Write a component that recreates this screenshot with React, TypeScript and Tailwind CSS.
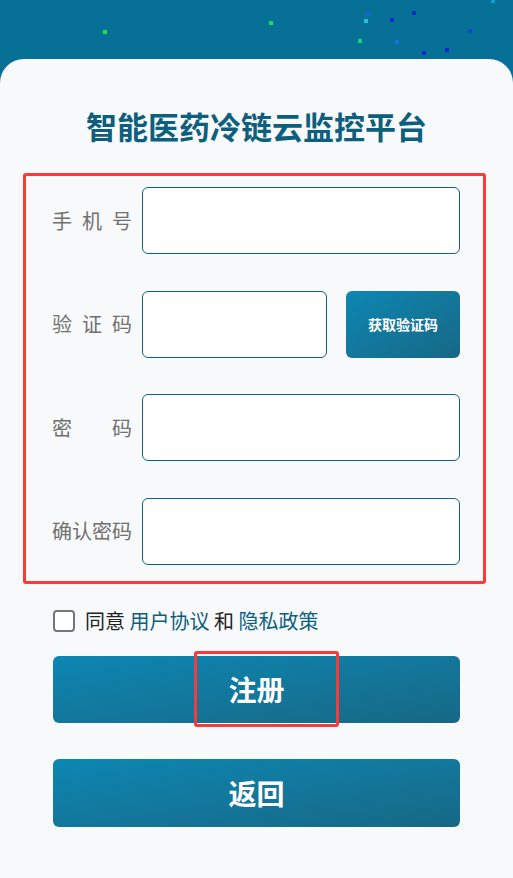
import React from "react";

const dots = [
  { x: 105, y: 32, c: "#1be04a" },
  { x: 271, y: 23, c: "#1be04a" },
  { x: 368, y: 13, c: "#1a5fe0" },
  { x: 366, y: 21, c: "#16c8d8" },
  { x: 392, y: 20, c: "#0b2bd0" },
  { x: 414, y: 13, c: "#0b2bd0" },
  { x: 493, y: 1, c: "#0fa0d8" },
  { x: 360, y: 41, c: "#18d07a" },
  { x: 397, y: 42, c: "#1870e0" },
  { x: 470, y: 31, c: "#1548d8" },
  { x: 424, y: 53, c: "#0b2bd0" },
  { x: 447, y: 50, c: "#0b2bd0" },
];

const font = { fontFamily: '"Noto Sans CJK SC", "Noto Sans", sans-serif' };

function Label({ chars }: { chars: string[] }) {
  return (
    <div className="w-[80px] shrink-0 flex justify-between text-[20px] leading-none text-[#707070]">
      {chars.map((c, i) => (
        <span key={i}>{c}</span>
      ))}
    </div>
  );
}

function Field() {
  return (
    <div className="flex-1 h-[67px] rounded-[6px] border border-[#0f6382] bg-white" />
  );
}

export default function App() {
  return (
    <div className="min-h-screen flex flex-col bg-[#077096]" style={font}>
      {/* header with particles */}
      <div className="h-[59px] relative shrink-0">
        {dots.map((d, i) => (
          <span
            key={i}
            className="absolute w-[4px] h-[4px]"
            style={{ left: d.x - 2, top: d.y - 2, background: d.c }}
          />
        ))}
      </div>

      <div className="flex-1 bg-[#f7f9fb] rounded-t-[24px] pb-[52px]">
        <h1 className="pt-[47px] h-[87px] text-center text-[31px] leading-[40px] font-bold text-[#0e5f7d]">
          智能医药冷链云监控平台
        </h1>

        {/* form */}
        <div className="mt-[27px] ml-[23px] w-[463px] border-[3px] border-[#f53b3b] rounded-[3px] pt-[11px] pb-[16px] pl-[26px] pr-[23px] flex flex-col gap-[36.5px]">
          <div className="flex items-center gap-[10px]">
            <Label chars={["手", "机", "号"]} />
            <Field />
          </div>
          <div className="flex items-center gap-[10px]">
            <Label chars={["验", "证", "码"]} />
            <div className="flex-1 flex gap-[19px]">
              <div className="w-[185px] h-[67px] rounded-[6px] border border-[#0f6382] bg-white" />
              <button className="flex-1 h-[67px] rounded-[6px] bg-linear-to-br from-[#0b87b3] to-[#166885] text-white text-[14px] font-bold">
                获取验证码
              </button>
            </div>
          </div>
          <div className="flex items-center gap-[10px]">
            <Label chars={["密", "码"]} />
            <Field />
          </div>
          <div className="flex items-center gap-[10px]">
            <Label chars={["确", "认", "密", "码"]} />
            <Field />
          </div>
        </div>

        {/* agreement */}
        <div className="mt-[22px] ml-[53px] h-[30px] flex items-center gap-[10px] text-[20px] leading-none">
          <span className="w-[22px] h-[22px] rounded-[4px] border-2 border-[#767676] bg-white" />
          <span className="text-[#222]">
            同意 <span className="text-[#0e5f7d]">用户协议</span> 和{" "}
            <span className="text-[#0e5f7d]">隐私政策</span>
          </span>
        </div>

        {/* buttons */}
        <div className="mt-[20px] ml-[53px] w-[407px] flex flex-col gap-[36px]">
          <div className="relative">
            <button className="w-full h-[67px] rounded-[6px] bg-linear-to-br from-[#0b87b3] to-[#166885] text-white text-[28px] font-bold">
              注册
            </button>
            <div className="absolute left-[141px] top-[-5px] w-[145px] h-[76px] border-[3px] border-[#f53b3b] rounded-[3px] pointer-events-none" />
          </div>
          <button className="w-full h-[68px] rounded-[6px] bg-linear-to-br from-[#0b87b3] to-[#166885] text-white text-[28px] font-bold">
            返回
          </button>
        </div>
      </div>
    </div>
  );
}
